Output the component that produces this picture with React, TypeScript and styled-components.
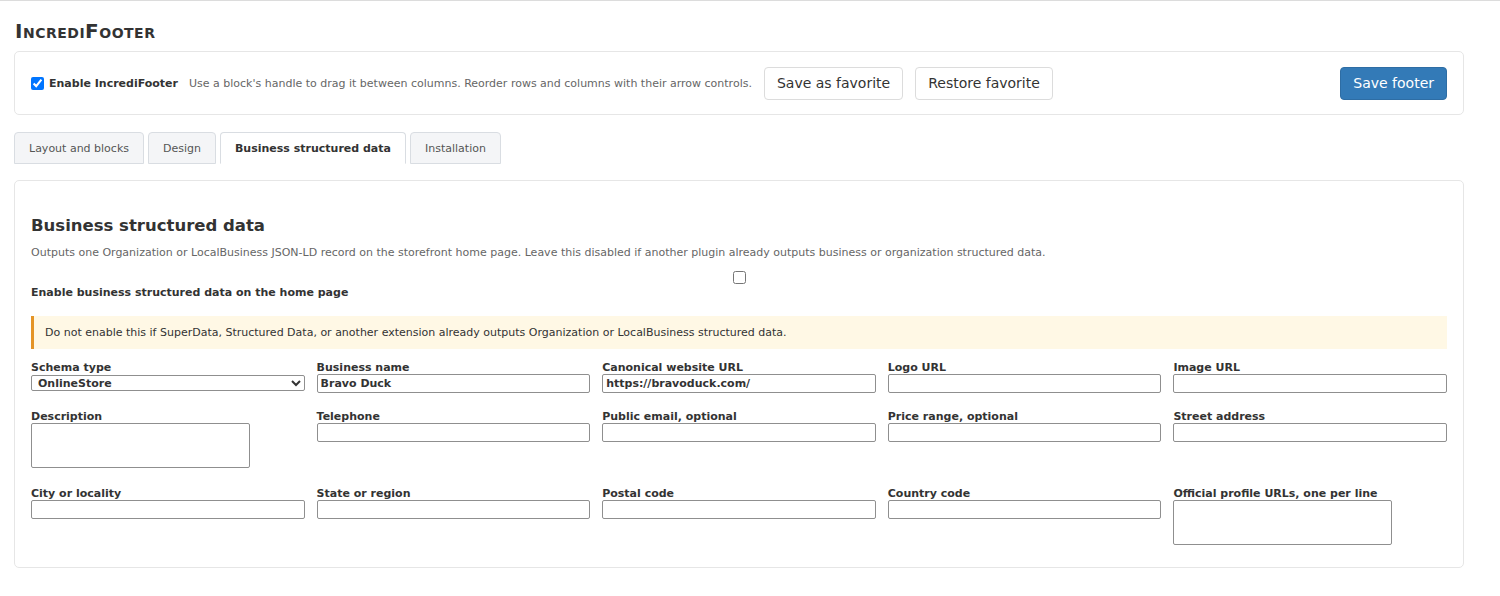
import React from 'react'
import styled, { createGlobalStyle } from 'styled-components'

const GlobalStyle = createGlobalStyle`
  * { box-sizing: border-box; }
  body {
    margin: 0;
    background: #fff;
    font-family: "DejaVu Sans", Verdana, sans-serif;
    color: #333;
  }
`

const Page = styled.div`
  border-top: 1px solid #dcdcdc;
  padding: 0 36px 30px 14px;
`

const AppTitle = styled.h1`
  margin: 20px 0 10px 1px;
  font-size: 20px;
  font-weight: bold;
  font-variant: small-caps;
  letter-spacing: 0.5px;
  color: #333;
  line-height: 20px;
`

const Toolbar = styled.div`
  display: flex;
  align-items: center;
  height: 64px;
  padding: 0 16px;
  border: 1px solid #e6e6e6;
  border-radius: 5px;
`

const Toggle = styled.label`
  display: flex;
  align-items: center;
  gap: 4px;
  font-size: 11px;
  font-weight: bold;
  color: #333;
  input { margin: 0 1px 0 0; width: 13px; height: 13px; }
`

const Hint = styled.span`
  margin-left: 11px;
  font-size: 11px;
  color: #666;
`

const Button = styled.button<{ $primary?: boolean }>`
  height: 33px;
  padding: 0 12px;
  font-family: inherit;
  font-size: 14px;
  border-radius: 4px;
  border: 1px solid ${({ $primary }) => ($primary ? '#2e6da4' : '#dcdcdc')};
  background: ${({ $primary }) => ($primary ? '#337ab7' : '#fff')};
  color: ${({ $primary }) => ($primary ? '#fff' : '#333')};
  margin-left: ${({ $primary }) => ($primary ? 'auto' : '12px')};
`

const Tabs = styled.div`
  display: flex;
  gap: 4px;
  margin-top: 17px;
`

const Tab = styled.div<{ $active?: boolean }>`
  height: 32px;
  display: flex;
  align-items: center;
  padding: 0 14px;
  font-size: 11px;
  border: 1px solid #d9dde2;
  border-bottom-color: ${({ $active }) => ($active ? 'transparent' : '#d9dde2')};
  border-radius: 4px 4px 0 0;
  background: ${({ $active }) => ($active ? '#fff' : '#f4f5f7')};
  font-weight: ${({ $active }) => ($active ? 'bold' : 'normal')};
  color: ${({ $active }) => ($active ? '#333' : '#555')};
`

const Panel = styled.section`
  margin-top: 16px;
  border: 1px solid #e6e6e6;
  border-radius: 5px;
  padding: 33px 16px 20px 16px;
`

const Heading = styled.h2`
  margin: 0;
  font-size: 16.5px;
  line-height: 24px;
  font-weight: bold;
  color: #333;
`

const Lead = styled.p`
  margin: 8px 0 0;
  font-size: 11px;
  color: #666;
`

const EnableField = styled.label`
  display: flex;
  flex-direction: column;
  margin-top: 12px;
  font-size: 11px;
  font-weight: bold;
  color: #333;
  input {
    align-self: center;
    margin: 0 0 2px;
    width: 13px;
    height: 13px;
  }
`

const Notice = styled.div`
  margin-top: 17px;
  height: 33px;
  display: flex;
  align-items: center;
  padding-left: 11px;
  background: #fff8e5;
  border-left: 3px solid #e49427;
  font-size: 11px;
  color: #333;
`

const Grid = styled.div`
  display: grid;
  grid-template-columns: repeat(5, 1fr);
  column-gap: 12px;
  row-gap: 17px;
  margin-top: 12px;
`

const Field = styled.label`
  display: flex;
  flex-direction: column;
  align-items: flex-start;
  font-size: 11px;
  font-weight: bold;
  line-height: 13px;
  color: #333;
`

const TextInput = styled.input`
  display: block;
  width: 100%;
  height: 19px;
  margin: 0;
  padding: 1px 3px;
  font: inherit;
  color: #333;
  border: 1px solid #8f8f8f;
  border-radius: 2px;
`

const Select = styled.select`
  display: block;
  width: 100%;
  height: 16px;
  margin: 1px 0 0;
  padding: 0 2px;
  font: inherit;
  color: #333;
  background: #fff;
  border: 1px solid #8f8f8f;
  border-radius: 2px;
`

const TextArea = styled.textarea`
  display: block;
  width: 219px;
  height: 45px;
  margin: 0 0 2px;
  font: inherit;
  border: 1px solid #8f8f8f;
  border-radius: 2px;
  resize: none;
`

type FieldDef = { label: string; value?: string; kind?: 'select' | 'area' }

const fields: FieldDef[] = [
  { label: 'Schema type', value: 'OnlineStore', kind: 'select' },
  { label: 'Business name', value: 'Bravo Duck' },
  { label: 'Canonical website URL', value: 'https://bravoduck.com/' },
  { label: 'Logo URL' },
  { label: 'Image URL' },
  { label: 'Description', kind: 'area' },
  { label: 'Telephone' },
  { label: 'Public email, optional' },
  { label: 'Price range, optional' },
  { label: 'Street address' },
  { label: 'City or locality' },
  { label: 'State or region' },
  { label: 'Postal code' },
  { label: 'Country code' },
  { label: 'Official profile URLs, one per line', kind: 'area' },
]

const FormField = ({ label, value, kind }: FieldDef) => (
  <Field>
    {label}
    {kind === 'select' ? (
      <Select defaultValue={value}>
        <option>Organization</option>
        <option>LocalBusiness</option>
        <option>OnlineStore</option>
        <option>Store</option>
      </Select>
    ) : kind === 'area' ? (
      <TextArea />
    ) : (
      <TextInput type="text" defaultValue={value} />
    )}
  </Field>
)

export default function App() {
  return (
    <>
      <GlobalStyle />
      <Page>
        <AppTitle>IncrediFooter</AppTitle>
        <Toolbar>
          <Toggle>
            <input type="checkbox" defaultChecked />
            Enable IncrediFooter
          </Toggle>
          <Hint>
            Use a block's handle to drag it between columns. Reorder rows and
            columns with their arrow controls.
          </Hint>
          <Button>Save as favorite</Button>
          <Button>Restore favorite</Button>
          <Button $primary>Save footer</Button>
        </Toolbar>

        <Tabs>
          <Tab>Layout and blocks</Tab>
          <Tab>Design</Tab>
          <Tab $active>Business structured data</Tab>
          <Tab>Installation</Tab>
        </Tabs>

        <Panel>
          <Heading>Business structured data</Heading>
          <Lead>
            Outputs one Organization or LocalBusiness JSON-LD record on the
            storefront home page. Leave this disabled if another plugin already
            outputs business or organization structured data.
          </Lead>
          <EnableField>
            <input type="checkbox" />
            Enable business structured data on the home page
          </EnableField>
          <Notice>
            Do not enable this if SuperData, Structured Data, or another
            extension already outputs Organization or LocalBusiness structured
            data.
          </Notice>
          <Grid>
            {fields.map((f) => (
              <FormField key={f.label} {...f} />
            ))}
          </Grid>
        </Panel>
      </Page>
    </>
  )
}
